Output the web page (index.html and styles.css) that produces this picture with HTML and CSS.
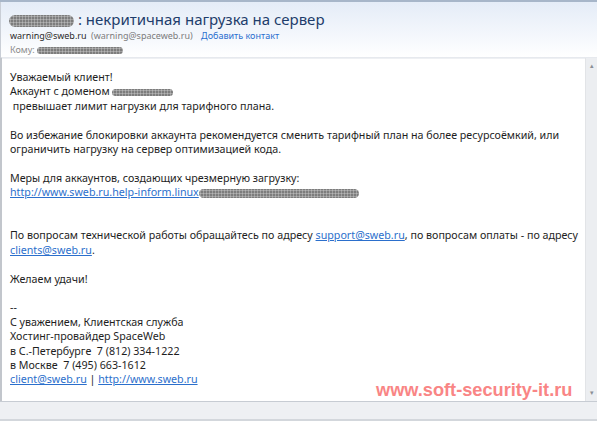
FILE: index.html
```html
<!DOCTYPE html>
<html>
<head>
    <title>некритичная нагрузка на сервер</title>
    <link rel="stylesheet" href="styles.css">
</head>
<body>
    <div class="window">
        <div class="header">
            <div class="subject"><span class="blot blot-subject"></span> : некритичная нагрузка на сервер</div>
            <div class="from">
                <span class="sender">warning@sweb.ru</span>
                <span class="sender-full">(warning@spaceweb.ru)</span>
                <a class="add-contact" href="#">Добавить контакт</a>
            </div>
            <div class="to">Кому: <span class="blot blot-to"></span></div>
        </div>

        <div class="main">
            <div class="message">
                <p>Уважаемый клиент!<br>
                Аккаунт с доменом <span class="blot blot-domain"></span><br>
                &nbsp;превышает лимит нагрузки для тарифного плана.</p>

                <p>Во избежание блокировки аккаунта рекомендуется сменить тарифный план на более ресурсоёмкий, или<br>
                ограничить нагрузку на сервер оптимизацией кода.</p>

                <p>Меры для аккаунтов, создающих чрезмерную загрузку:<br>
                <a href="#">http://www.sweb.ru.help-inform.linux</a><span class="blot blot-link"></span></p>

                <p class="gap">По вопросам технической работы обращайтесь по адресу <a href="#">support@sweb.ru</a>, по вопросам оплаты - по адресу<br>
                <a href="#">clients@sweb.ru</a>.</p>

                <p>Желаем удачи!</p>

                <p>--<br>
                С уважением, Клиентская служба<br>
                Хостинг-провайдер SpaceWeb<br>
                в С.-Петербурге &nbsp;7 (812) 334-1222<br>
                в Москве &nbsp;7 (495) 663-1612<br>
                <a href="#">client@sweb.ru</a> | <a href="#">http://www.sweb.ru</a></p>

                <div class="watermark">www.soft-security-it.ru</div>
            </div>
            <div class="scrollbar">
                <span class="arrow">&#9652;</span>
                <span class="arrow">&#9662;</span>
            </div>
        </div>

        <div class="statusbar"></div>
    </div>
</body>
</html>
```

FILE: styles.css
```css
body {
    margin: 0;
    font-family: "Noto Sans", "Open Sans", sans-serif;
    background: #fff;
}
.window {
    width: 597px;
    height: 421px;
    box-sizing: border-box;
    border-top: 2px solid #a7b6c9;
    display: flex;
    flex-direction: column;
    overflow: hidden;
}
.header {
    height: 58px;
    box-sizing: border-box;
    padding: 8px 0 0 9px;
    background: linear-gradient(#e4ecf7, #f4f7fc 60%, #ffffff);
    border-left: 1px solid #c9ced6;
}
.subject {
    font-size: 15px;
    line-height: 19px;
    color: #1e3d6b;
}
.from {
    font-size: 9px;
    line-height: 14px;
}
.sender {
    color: #2a2a2a;
}
.sender-full {
    color: #7c7c7c;
    margin-left: 2px;
}
.add-contact {
    color: #2a6fcf;
    text-decoration: none;
    margin-left: 6px;
}
.to {
    font-size: 9px;
    line-height: 14px;
    color: #8a8a8a;
}
.blot {
    display: inline-block;
    vertical-align: middle;
    border-radius: 8px;
    background-color: #7d7d7d;
    background-image: radial-gradient(circle, #b5b5b5 0.8px, transparent 1.3px);
    background-size: 3px 3px;
}
.blot-subject {
    width: 65px;
    height: 12px;
    margin-left: -1px;
}
.blot-to {
    width: 86px;
    height: 7px;
}
.blot-domain {
    width: 61px;
    height: 7px;
}
.blot-link {
    width: 160px;
    height: 9px;
}
.main {
    flex: 1;
    display: flex;
    border-top: 1px solid #e6e9ee;
    border-left: 2px solid #c2c6cc;
}
.message {
    flex: 1;
    position: relative;
    padding: 11px 0 0 8px;
    font-size: 10.7px;
    line-height: 14.4px;
    color: #1e1e1e;
    border-top: 1px solid #eef0f3;
}
.message p {
    margin: 0 0 14.4px 0;
    white-space: nowrap;
}
.message p.gap {
    margin-top: 28.8px;
}
.message a {
    color: #2b6fcc;
}
.watermark {
    position: absolute;
    left: 374px;
    top: 324px;
    font-family: "Liberation Sans", Arial, sans-serif;
    font-weight: bold;
    font-size: 18.2px;
    color: #f98585;
}
.scrollbar {
    width: 11px;
    background: #eceef1;
    border-left: 1px solid #e2e4e7;
    display: flex;
    flex-direction: column;
    justify-content: space-between;
    align-items: center;
    padding: 4px 0;
}
.arrow {
    font-size: 7px;
    line-height: 8px;
    color: #8b8f96;
}
.statusbar {
    height: 18px;
    background: #eef0f3;
    border-top: 1px solid #c7ccd3;
    border-bottom: 2px solid #d3d7dc;
}
```
